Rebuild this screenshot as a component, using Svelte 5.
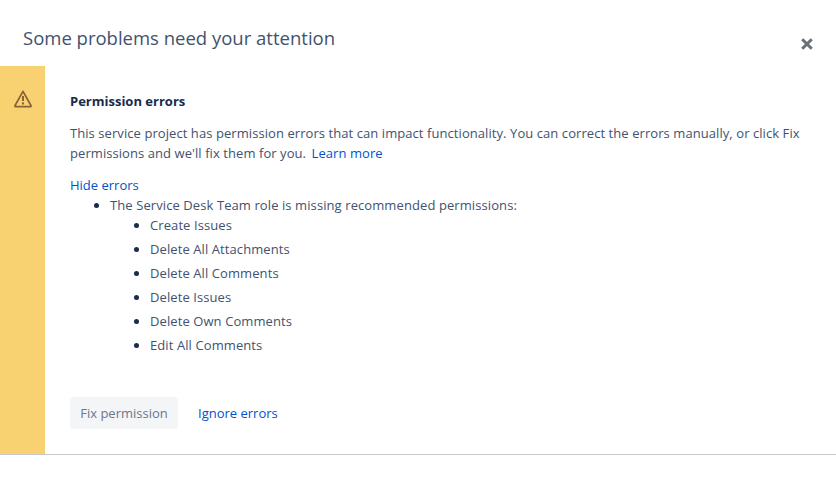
<script>
  const perms = ['Create Issues','Delete All Attachments','Delete All Comments','Delete Issues','Delete Own Comments','Edit All Comments'];
</script>

<div class="dialog">
  <header class="head">
    <h1>Some problems need your attention</h1>
    <button class="close" aria-label="Close">
      <svg width="14" height="14" viewBox="0 0 14 14"><path d="M2.2 2.2 L11.8 11.8 M11.8 2.2 L2.2 11.8" stroke="#6b6f76" stroke-width="3"/></svg>
    </button>
  </header>
  <section class="body">
    <div class="flag">
      <svg width="20" height="20" viewBox="0 0 20 20" fill="none"><path d="M10 2.4 L18 16.6 Q18.3 17.6 17.2 17.6 H2.8 Q1.7 17.6 2 16.6 Z" stroke="#8a6238" stroke-width="1.8" stroke-linejoin="round"/><path d="M10 7 V12" stroke="#8a6238" stroke-width="2"/><circle cx="10" cy="14.5" r="1.15" fill="#8a6238"/></svg>
    </div>
    <div class="content">
      <h2>Permission errors</h2>
      <p>This service project has permission errors that can impact functionality. You can correct the errors manually, or click Fix permissions and we'll fix them for you. <a class="more" href="#a">Learn more</a></p>
      <a class="hide" href="#a">Hide errors</a>
      <ul class="outer">
        <li>The Service Desk Team role is missing recommended permissions:
          <ul class="inner">
            {#each perms as p}<li>{p}</li>{/each}
          </ul>
        </li>
      </ul>
      <div class="actions">
        <button class="fix">Fix permission</button>
        <a class="ignore" href="#a">Ignore errors</a>
      </div>
    </div>
  </section>
</div>

<style>
  :global(body) { margin: 0; background: #fff; }
  .dialog { width: 836px; height: 478px; font-family: "Open Sans", "Noto Sans", sans-serif; font-size: 13px; color: #42526e; overflow: hidden; }
  .head { height: 66px; display: flex; justify-content: space-between; padding: 0 22px 0 23px; box-sizing: border-box; }
  h1 { margin: 24px 0 0; font-size: 18.5px; line-height: 28px; font-weight: 400; color: #42526e; }
  .close { border: 0; background: none; padding: 0; margin: 37px 0 0; width: 14px; height: 14px; display: flex; }
  .body { display: flex; height: 389px; box-sizing: border-box; border-bottom: 1px solid #c9c9c9; }
  .flag { width: 45px; background: #f8d171; display: flex; justify-content: center; padding-top: 23px; box-sizing: border-box; }
  .flag svg { display: block; }
  .content { flex: 1; padding: 25px 25px 0; }
  h2 { margin: 0; font-size: 13px; line-height: 20px; font-weight: 700; color: #172b4d; }
  p { margin: 12px 0 0; line-height: 20px; letter-spacing: 0.07px; }
  .more { margin-left: 2px; }
  a { color: #0052cc; text-decoration: none; }
  .hide { display: block; margin-top: 12px; line-height: 20px; }
  ul { margin: 0; padding: 0 0 0 40px; }
  li { list-style: disc; letter-spacing: 0.09px; }
  li::marker { color: #172b4d; }
  .outer > li { line-height: 20px; }
  .inner li { line-height: 20px; margin-top: 4px; }
  .inner li:first-child { margin-top: 0; }
  .actions { display: flex; align-items: center; margin-top: 42px; }
  .fix { height: 32px; width: 108px; border: 0; border-radius: 3px; background: #f4f5f7; color: #6b778c; font: inherit; padding: 0; }
  .ignore { margin-left: 20px; }
</style>
